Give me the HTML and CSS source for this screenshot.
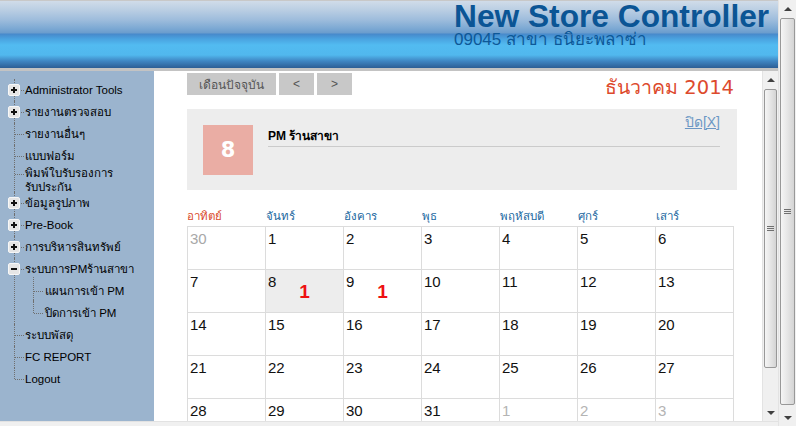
FILE: index.html
```html
<!DOCTYPE html>
<html lang="th">
<head>
<meta charset="utf-8">
<title>New Store Controller</title>
<link rel="stylesheet" href="styles.css">
</head>
<body>
<div class="page">
  <div class="main">
    <header class="header">
      <div class="brand-title">New Store Controller</div>
      <div class="brand-sub">09045 สาขา ธนิยะพลาซ่า</div>
    </header>
    <div class="body">
      <nav class="sidebar">
        <ul class="tree">
          <li class="node"><span class="toggle plus"></span>Administrator Tools</li>
          <li class="node"><span class="toggle plus"></span>รายงานตรวจสอบ</li>
          <li class="leaf">รายงานอื่นๆ</li>
          <li class="leaf">แบบฟอร์ม</li>
          <li class="leaf double">พิมพ์ใบรับรองการ<br>รับประกัน</li>
          <li class="node"><span class="toggle plus"></span>ข้อมูลรูปภาพ</li>
          <li class="node"><span class="toggle plus"></span>Pre-Book</li>
          <li class="node"><span class="toggle plus"></span>การบริหารสินทรัพย์</li>
          <li class="node open"><span class="toggle minus"></span>ระบบการPMร้านสาขา
            <ul class="subtree">
              <li class="sub">แผนการเข้า PM</li>
              <li class="sub">ปิดการเข้า PM</li>
            </ul>
          </li>
          <li class="leaf">ระบบพัสดุ</li>
          <li class="leaf">FC REPORT</li>
          <li class="leaf last">Logout</li>
        </ul>
      </nav>
      <div class="frame">
        <div class="frame-content">
          <div class="toolbar">
            <button class="btn btn-wide">เดือนปัจจุบัน</button>
            <button class="btn">&lt;</button>
            <button class="btn">&gt;</button>
            <div class="month-title">ธันวาคม 2014</div>
          </div>
          <div class="panel">
            <div class="day-box">8</div>
            <div class="detail">
              <div class="detail-title">PM ร้านสาขา</div>
            </div>
            <a class="close-link" href="#">ปิด[X]</a>
          </div>
          <div class="weekdays">
            <div class="wd sun">อาทิตย์</div>
            <div class="wd">จันทร์</div>
            <div class="wd">อังคาร</div>
            <div class="wd">พุธ</div>
            <div class="wd">พฤหัสบดี</div>
            <div class="wd">ศุกร์</div>
            <div class="wd">เสาร์</div>
          </div>
          <div class="grid">
            <div class="cell muted"><span class="date">30</span></div>
            <div class="cell"><span class="date">1</span></div>
            <div class="cell"><span class="date">2</span></div>
            <div class="cell"><span class="date">3</span></div>
            <div class="cell"><span class="date">4</span></div>
            <div class="cell"><span class="date">5</span></div>
            <div class="cell"><span class="date">6</span></div>

            <div class="cell"><span class="date">7</span></div>
            <div class="cell selected"><span class="date">8</span><span class="count">1</span></div>
            <div class="cell"><span class="date">9</span><span class="count">1</span></div>
            <div class="cell"><span class="date">10</span></div>
            <div class="cell"><span class="date">11</span></div>
            <div class="cell"><span class="date">12</span></div>
            <div class="cell"><span class="date">13</span></div>

            <div class="cell"><span class="date">14</span></div>
            <div class="cell"><span class="date">15</span></div>
            <div class="cell"><span class="date">16</span></div>
            <div class="cell"><span class="date">17</span></div>
            <div class="cell"><span class="date">18</span></div>
            <div class="cell"><span class="date">19</span></div>
            <div class="cell"><span class="date">20</span></div>

            <div class="cell"><span class="date">21</span></div>
            <div class="cell"><span class="date">22</span></div>
            <div class="cell"><span class="date">23</span></div>
            <div class="cell"><span class="date">24</span></div>
            <div class="cell"><span class="date">25</span></div>
            <div class="cell"><span class="date">26</span></div>
            <div class="cell"><span class="date">27</span></div>

            <div class="cell"><span class="date">28</span></div>
            <div class="cell"><span class="date">29</span></div>
            <div class="cell"><span class="date">30</span></div>
            <div class="cell"><span class="date">31</span></div>
            <div class="cell muted light"><span class="date">1</span></div>
            <div class="cell muted light"><span class="date">2</span></div>
            <div class="cell muted light"><span class="date">3</span></div>
          </div>
        </div>
        <div class="vscroll inner">
          <div class="sb-btn"><span class="arrow-up"></span></div>
          <div class="sb-track"><div class="thumb"><span class="grip"></span></div></div>
          <div class="sb-btn"><span class="arrow-down"></span></div>
        </div>
      </div>
    </div>
    <div class="foot"></div>
  </div>
  <div class="vscroll outer">
    <div class="sb-btn"><span class="arrow-up"></span></div>
    <div class="sb-track"><div class="thumb"><span class="grip"></span></div></div>
    <div class="sb-btn"><span class="arrow-down"></span></div>
  </div>
</div>
</body>
</html>
```

FILE: styles.css
```css
* { box-sizing: border-box; }
html, body { margin: 0; padding: 0; }
body {
  width: 796px;
  height: 426px;
  overflow: hidden;
  background: #fff;
  font-family: "Liberation Sans", "DejaVu Sans", sans-serif;
  color: #000;
}
.page { display: flex; height: 426px; }
.main { width: 778px; display: flex; flex-direction: column; }

/* header */
.header {
  height: 68px;
  border-top: 1px solid #c8c8c8;
  padding-left: 454px;
  background: linear-gradient(to bottom,
    #d0dce9 0px, #bacee3 9px, #9dbcdc 19px, #7eaad4 27px, #6a9ccd 32px,
    #4789cb 33px, #4aa3e0 38px, #52bbf1 44px, #51b8ee 54px,
    #3f86c3 60px, #2d5e95 67px);
}
.brand-title {
  font: bold 31.7px/31px "Liberation Sans", Arial, sans-serif;
  color: #0b5595;
  white-space: nowrap;
}
.brand-sub {
  font: 17px/15px "Liberation Sans", Arial, sans-serif;
  color: #0d5898;
  white-space: nowrap;
}

.body {
  height: 353px;
  border-top: 3px solid #c3c3c3;
  display: flex;
}
.foot {
  flex: 1;
  background: #f0f0f0;
  border-top: 1px solid #e2e2e2;
}

/* sidebar */
.sidebar {
  width: 154px;
  background: #9bb4ce;
  padding-top: 8px;
}
.tree, .subtree { list-style: none; margin: 0; padding: 0; }
.tree li {
  position: relative;
  font-size: 11.5px;
  line-height: 14px;
  padding: 4px 0 4px 25px;
  white-space: nowrap;
}
.tree > li::before {
  content: "";
  position: absolute;
  left: 14px; top: 0; bottom: 0;
  border-left: 1px dotted #6f6f6f;
}
.tree > li.last::before { bottom: auto; height: 11px; }
.tree > li::after {
  content: "";
  position: absolute;
  left: 15px; top: 11px; width: 9px;
  border-top: 1px dotted #6f6f6f;
}
.tree > li.double { padding-top: 0; padding-bottom: 0; line-height: 13.5px; margin-bottom: -2px; }
.tree > li.double::after { top: 7px; }
.toggle {
  position: absolute;
  left: 8px; top: 5px;
  width: 12px; height: 12px;
  background: #e6e6e6;
  border: 1px solid #f7f7f7;
  border-radius: 2px;
  z-index: 1;
}
.toggle::before {
  content: "";
  position: absolute;
  left: 2px; top: 4px; width: 6px; height: 2px;
  background: #111;
}
.toggle.plus::after {
  content: "";
  position: absolute;
  left: 4px; top: 2px; width: 2px; height: 6px;
  background: #111;
}
.subtree { margin-left: -25px; margin-top: 4px; margin-bottom: -4px; }
.tree .sub { padding-left: 45px; }
.tree .sub::before {
  content: "";
  position: absolute;
  left: 33px; top: -3px; bottom: 0;
  border-left: 1px dotted #6f6f6f;
}
.tree .sub:last-child::before { bottom: auto; height: 14px; }
.tree .sub::after {
  content: "";
  position: absolute;
  left: 34px; top: 11px; width: 9px;
  border-top: 1px dotted #6f6f6f;
}

/* frame */
.frame { flex: 1; display: flex; background: #fff; overflow: hidden; }
.frame-content {
  flex: 1;
  padding: 2px 0 0 33px;
  overflow: hidden;
  font-family: "Liberation Sans", "DejaVu Sans", sans-serif;
}
.toolbar {
  width: 550px;
  height: 22px;
  display: flex;
  align-items: flex-start;
  gap: 3px;
}
.btn {
  height: 22px;
  width: 35px;
  border: 0;
  margin: 0;
  padding: 0;
  background: #c8c8c8;
  color: #555;
  font-family: "Liberation Sans", "DejaVu Sans", sans-serif;
  font-size: 12px;
}
.btn-wide { width: 89px; }
.month-title {
  margin-left: auto;
  margin-right: 3px;
  margin-top: 3px;
  font-family: "DejaVu Sans", sans-serif;
  font-size: 19.5px;
  line-height: 24px;
  color: #dd4a2d;
  white-space: nowrap;
}
.panel {
  position: relative;
  width: 550px;
  height: 81px;
  margin-top: 14px;
  background: #ededed;
  padding: 16px 17px 15px 16px;
  display: flex;
}
.day-box {
  width: 50px; height: 50px;
  background: #eaada4;
  color: #fff;
  font: bold 21px/50px "DejaVu Sans", sans-serif;
  text-align: center;
}
.detail { flex: 1; margin-left: 15px; padding-top: 3px; }
.detail-title {
  font-weight: bold;
  font-size: 12px;
  line-height: 16px;
  padding-bottom: 2px;
  border-bottom: 1px solid #cbcbcb;
}
.close-link {
  position: absolute;
  top: 4px; right: 17px;
  font-size: 14px;
  line-height: 18px;
  color: #6b97c4;
  text-decoration: underline;
}
.weekdays {
  width: 547px;
  margin-top: 16px;
  height: 20px;
  display: grid;
  grid-template-columns: repeat(7, 78px);
}
.wd {
  font-size: 11.5px;
  line-height: 20px;
  color: #22689f;
  padding-left: 1px;
}
.wd.sun { color: #d9492b; padding-left: 0; }
.grid {
  width: 547px;
  display: grid;
  grid-template-columns: repeat(7, 77px);
  grid-auto-rows: 42px;
  gap: 1px;
  padding: 1px;
  background: #dcdcdc;
}
.cell {
  background: #fff;
  display: grid;
  padding: 3px 0 0 2px;
}
.cell > * { grid-area: 1 / 1; }
.date {
  align-self: start;
  justify-self: start;
  font-size: 15px;
  line-height: 18px;
  color: #111;
}
.cell.selected { background: #ededed; }
.cell.muted .date { color: #a8a8a8; }
.cell.light .date { color: #b4b4b4; }
.count {
  align-self: start;
  justify-self: center;
  margin-top: 8px;
  margin-left: -2px;
  font: bold 19px/22px "Liberation Sans", sans-serif;
  color: #ee1111;
}

/* scrollbars */
.vscroll {
  display: flex;
  flex-direction: column;
  background: #f0f0f0;
}
.vscroll.inner { width: 16px; border-left: 1px solid #e3e3e3; }
.vscroll.outer { width: 18px; height: 426px; border-left: 1px solid #e3e3e3; }
.sb-btn {
  height: 17px;
  display: flex;
  align-items: center;
  justify-content: center;
  flex: none;
}
.arrow-up, .arrow-down {
  width: 0; height: 0;
  border-left: 4px solid transparent;
  border-right: 4px solid transparent;
}
.arrow-up { border-bottom: 4px solid #404040; }
.arrow-down { border-top: 4px solid #404040; }
.sb-track { flex: 1; display: flex; flex-direction: column; }
.thumb {
  margin: 1px 1px 0 1px;
  border: 1px solid #989898;
  border-radius: 2px;
  background: linear-gradient(to right, #f5f5f5, #e7e7e7 45%, #d4d4d4);
  display: flex;
  align-items: center;
  justify-content: center;
}
.inner .thumb { height: 279px; }
.outer .thumb { height: 387px; }
.grip {
  width: 7px;
  height: 5px;
  background: repeating-linear-gradient(to bottom, #707070 0 1px, transparent 1px 2px);
}
```
